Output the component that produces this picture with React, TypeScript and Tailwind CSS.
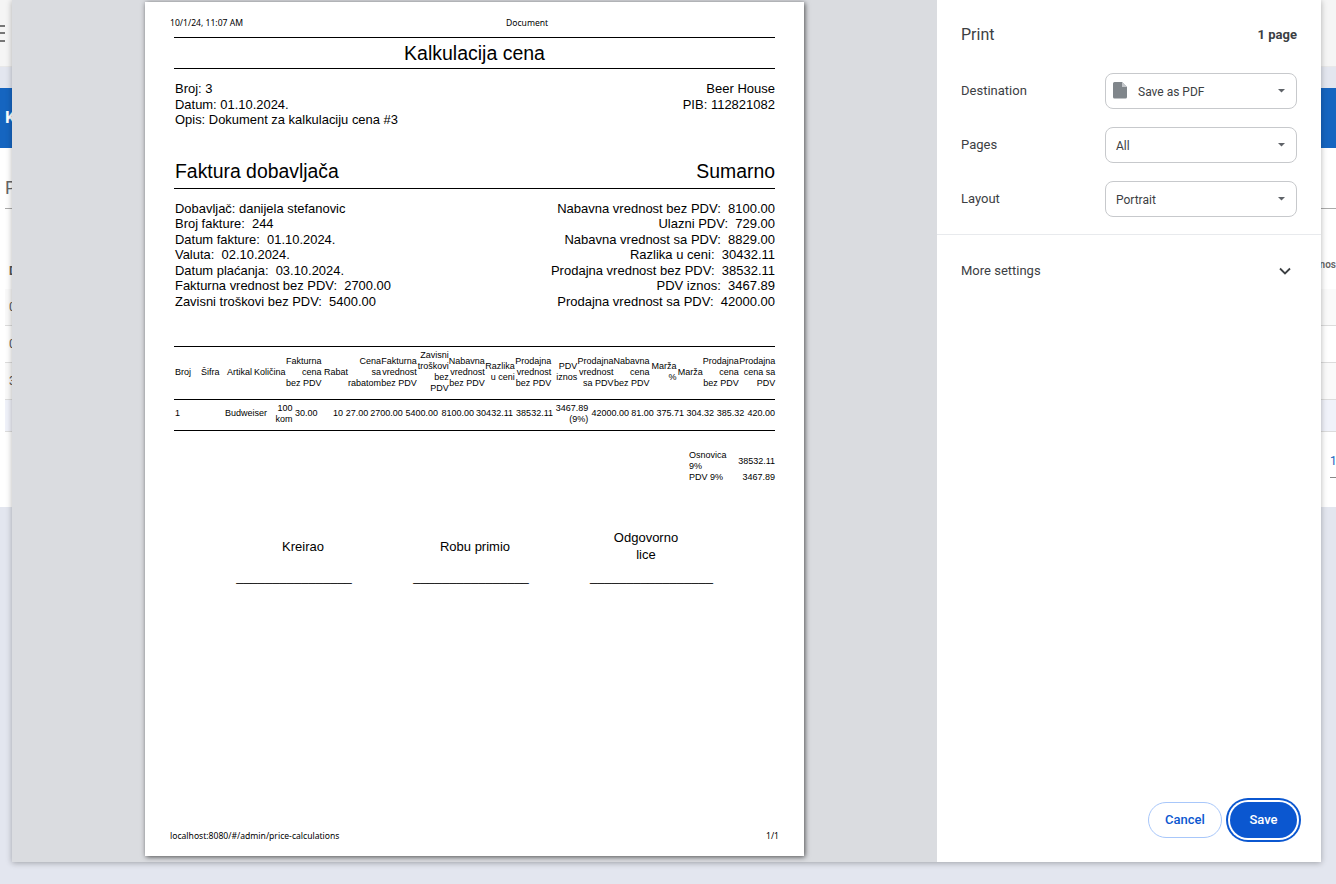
import React from "react";

const headerCells: { c: string; l: string[] }[] = [
  { c: "w-[27px] pl-[1px] text-left", l: ["Broj"] },
  { c: "w-[26px] text-left", l: ["Šifra"] },
  { c: "w-[27px] text-left", l: ["Artikal"] },
  { c: "w-[32px] text-left", l: ["Količina"] },
  { c: "w-[35.500px] text-right", l: ["Fakturna", "cena", "bez PDV"] },
  { c: "w-[26.500px] text-right", l: ["Rabat"] },
  { c: "w-[33px] text-right", l: ["Cena", "sa", "rabatom"] },
  { c: "w-[35.700px] text-right", l: ["Fakturna", "vrednost", "bez PDV"] },
  { c: "w-[32px] text-right", l: ["Zavisni", "troškovi", "bez", "PDV"] },
  { c: "w-[36px] text-right", l: ["Nabavna", "vrednost", "bez PDV"] },
  { c: "w-[30px] text-right", l: ["Razlika", "u ceni"] },
  { c: "w-[36.500px] text-right", l: ["Prodajna", "vrednost", "bez PDV"] },
  { c: "w-[26px] text-right", l: ["PDV", "iznos"] },
  { c: "w-[36.300px] text-right", l: ["Prodajna", "vrednost", "sa PDV"] },
  { c: "w-[36px] text-right", l: ["Nabavna", "cena", "bez PDV"] },
  { c: "w-[27px] text-right", l: ["Marža", "%"] },
  { c: "w-[26.200px] text-right", l: ["Marža"] },
  { c: "w-[36.200px] text-right", l: ["Prodajna", "cena", "bez PDV"] },
  { c: "w-[36.300px] text-right", l: ["Prodajna", "cena sa", "PDV"] },
];

const rowCells: { c: string; l: string[] }[] = [
  { c: "w-[51px] pl-[1px] text-left", l: ["1"] },
  { c: "w-[43px] text-left", l: ["Budweiser"] },
  { c: "w-[24.500px] text-right", l: ["100", "kom"] },
  { c: "w-[26px] pl-[2.500px] text-left", l: ["30.00"] },
  { c: "w-[24.500px] text-right", l: ["10"] },
  { c: "w-[25.300px] text-right", l: ["27.00"] },
  { c: "w-[34.400px] text-right", l: ["2700.00"] },
  { c: "w-[35.300px] text-right", l: ["5400.00"] },
  { c: "w-[36px] text-right", l: ["8100.00"] },
  { c: "w-[39px] text-right", l: ["30432.11"] },
  { c: "w-[40px] text-right", l: ["38532.11"] },
  { c: "w-[35.300px] text-right", l: ["3467.89", "(9%)"] },
  { c: "w-[40.700px] text-right", l: ["42000.00"] },
  { c: "w-[24.700px] text-right", l: ["81.00"] },
  { c: "w-[30.300px] text-right", l: ["375.71"] },
  { c: "w-[30px] text-right", l: ["304.32"] },
  { c: "w-[30.300px] text-right", l: ["385.32"] },
  { c: "w-[30.700px] text-right", l: ["420.00"] },
];

const supplier = [
  "Dobavljač: danijela stefanovic",
  "Broj fakture:  244",
  "Datum fakture:  01.10.2024.",
  "Valuta:  02.10.2024.",
  "Datum plaćanja:  03.10.2024.",
  "Fakturna vrednost bez PDV:  2700.00",
  "Zavisni troškovi bez PDV:  5400.00",
];
const summary = [
  "Nabavna vrednost bez PDV:  8100.00",
  "Ulazni PDV:  729.00",
  "Nabavna vrednost sa PDV:  8829.00",
  "Razlika u ceni:  30432.11",
  "Prodajna vrednost bez PDV:  38532.11",
  "PDV iznos:  3467.89",
  "Prodajna vrednost sa PDV:  42000.00",
];

function Cell({ c, l }: { c: string; l: string[] }) {
  return (
    <div className={c + " shrink-0 whitespace-nowrap"}>
      {l.map((t) => (
        <div key={t}>{t}</div>
      ))}
    </div>
  );
}

function Caret() {
  return (
    <svg width="7" height="4" viewBox="0 0 7 4" className="shrink-0 mr-[1px]">
      <path d="M0 0h7L3.500 3.500z" fill="#5f6368" />
    </svg>
  );
}

function Select({ label, text, icon }: { label: string; text: string; icon?: boolean }) {
  return (
    <div className="flex items-center justify-between">
      <span className="text-[13px] text-[#3c4043]">{label}</span>
      <div className={(icon ? "pl-[6px]" : "pl-[7px]") + " w-[192px] h-[36px] rounded-lg border border-[#c7c9cc] flex items-center pr-[10px]"}>
        {icon ? (
          <svg width="16" height="18" viewBox="0 0 16 18" className="mr-[10px] -mt-[2px] shrink-0">
            <path d="M2.500 1h7.500l5 5v10a1.500 1.500 0 0 1-1.500 1.500h-11A1.500 1.500 0 0 1 1 16V2.500A1.500 1.500 0 0 1 2.500 1z" fill="#80868b" />
            <path d="M10 1l5 5h-5z" fill="#c4c7cb" />
          </svg>
        ) : (
          <span className="w-[3px]" />
        )}
        <span className="text-[12px] text-[#3c4043] flex-1 pt-[3px]">{text}</span>
        <Caret />
      </div>
    </div>
  );
}

function Sign({ title, line, c, t }: { title: React.ReactNode; line: string; c: string; t: string }) {
  return (
    <div className={c + " flex flex-col items-center text-center text-[13px] leading-[17px]"}>
      <div className={t + " h-[34px] flex items-center"}>{title}</div>
      <div className="mt-[5px] whitespace-nowrap">{line}</div>
    </div>
  );
}

function BgRow({ c, left, right }: { c: string; left: string; right?: string }) {
  return (
    <div className={c + " h-[37px] border-b border-[#dcdcdc] flex items-center justify-between text-[12px] text-[#555]"}>
      <span>{left}</span>
      <span>{right}</span>
    </div>
  );
}

export default function App() {
  return (
    <div className="relative w-[1336px] h-[884px] overflow-hidden bg-[#e3e6ef] font-['Roboto',sans-serif]">
      {/* page beneath the dialog */}
      <div className="h-[67px] bg-[#f5f5f5] flex flex-col justify-center gap-[5.500px] border-b border-[#e8e8e8]">
        <div className="w-[5px] h-[2px] bg-[#777]" />
        <div className="w-[5px] h-[2px] bg-[#777]" />
        <div className="w-[5px] h-[2px] bg-[#777]" />
      </div>
      <div className="h-[21px]" />
      <div className="h-[60px] bg-[#1565c0] flex items-center pl-[5px] text-white font-bold text-[17px]">K</div>
      <div className="h-[359px] bg-white pl-[5px]">
        <div className="h-[61px] border-b border-[#aaa] flex items-end pb-[7px] text-[18px] text-[#666]">P</div>
        <div className="h-[80px] flex items-end justify-between pb-[9px] font-bold text-[#555]">
          <span className="pl-[4px] text-[12px]">D</span>
          <span className="mb-[8px] text-[10px] font-semibold text-[#666]">nos</span>
        </div>
        <BgRow c="bg-[#fafafa] pl-[4px]" left="0" />
        <BgRow c="bg-white pl-[4px]" left="0" />
        <BgRow c="bg-[#fafafa] pl-[4px]" left="3" />
        <div className="h-[32px] bg-[#f0f2fa] border-b border-[#dcdcdc]" />
        <div className="flex justify-end pt-[22px] text-[12px] text-[#1565c0]">
          <span className="w-[6px] border-b border-[#888] pb-[9px] leading-[14px]">1</span>
        </div>
      </div>

      {/* print dialog */}
      <div className="absolute left-[12px] top-0 w-[1309px] h-[862px] flex bg-white shadow-[0_1px_6px_rgba(0,0,0,0.3)]">
        <div className="w-[925px] h-full bg-[#dadce0] flex justify-center pt-[2px]">
          <div className="w-[659px] h-[854px] bg-white shadow-[1px_1px_5px_rgba(0,0,0,0.65)] pl-[29px] pr-[29px] flex flex-col font-['Liberation_Sans',sans-serif] text-black">
            <div className="-mx-[4px] h-[35px] pt-[14px] flex gap-[263px] text-[8.600px] leading-[14px] font-['Noto_Sans',sans-serif]">
              <span className="whitespace-nowrap">10/1/24, 11:07 AM</span>
              <span className="whitespace-nowrap">Document</span>
            </div>
            <div className="h-[32px] pt-[1px] border-y border-black flex items-center justify-center text-[19.500px]">Kalkulacija cena</div>
            <div className="mt-[12px] flex justify-between text-[12.950px] leading-[15.500px] pl-[1px]">
              <div>
                <div>Broj: 3</div>
                <div>Datum: 01.10.2024.</div>
                <div>Opis: Dokument za kalkulaciju cena #3</div>
              </div>
              <div className="text-right text-[13px]">
                <div>Beer House</div>
                <div>PIB: 112821082</div>
              </div>
            </div>
            <div className="mt-[27px] h-[34px] pt-[2px] border-b border-black flex justify-between items-center text-[19.400px] pl-[1px]">
              <span>Faktura dobavljača</span>
              <span>Sumarno</span>
            </div>
            <div className="mt-[12px] flex justify-between text-[12.950px] leading-[15.500px] pl-[1px] whitespace-pre">
              <div>
                {supplier.map((s) => (
                  <div key={s}>{s}</div>
                ))}
              </div>
              <div className="text-right text-[13px]">
                {summary.map((s) => (
                  <div key={s}>{s}</div>
                ))}
              </div>
            </div>
            <div className="mt-[37px] text-[9px] leading-[11px]">
              <div className="h-[54px] pb-[2px] border-y border-black flex items-center">
                {headerCells.map((h) => (
                  <Cell key={h.c + h.l[0]} c={h.c} l={h.l} />
                ))}
              </div>
              <div className="h-[31px] pb-[3px] border-b border-black flex items-center">
                {rowCells.map((h) => (
                  <Cell key={h.c + h.l[0]} c={h.c} l={h.l} />
                ))}
              </div>
              <div className="mt-[19px] ml-auto w-[86px]">
                <div className="flex justify-between items-center">
                  <span>
                    Osnovica
                    <br />
                    9%
                  </span>
                  <span className="pt-[1px]">38532.11</span>
                </div>
                <div className="flex justify-between">
                  <span>PDV 9%</span>
                  <span>3467.89</span>
                </div>
              </div>
            </div>
            <div className="mt-[46px] flex">
              <Sign c="ml-[62px] w-[116px]" t="pl-[18px]" title="Kreirao" line="________________" />
              <Sign c="ml-[61px] w-[116px]" t="pl-[8px]" title="Robu primio" line="________________" />
              <Sign
                c="ml-[61px] w-[123px]"
                t="pr-[11px]"
                title={
                  <span>
                    Odgovorno
                    <br />
                    lice
                  </span>
                }
                line="_________________"
              />
            </div>
            <div className="-mx-[4px] mt-auto h-[27px] flex justify-between text-[8.600px] leading-[14px] font-['Noto_Sans',sans-serif]">
              <span>localhost:8080/#/admin/price-calculations</span>
              <span>1/1</span>
            </div>
          </div>
        </div>

        <div className="flex-1 flex flex-col">
          <div className="px-[24px] pt-[25px] flex items-center justify-between">
            <span className="text-[16px] leading-[19px] text-[#3c4043]">Print</span>
            <span className="text-[13px] font-bold text-[#3c4043]">1 page</span>
          </div>
          <div className="px-[24px] pt-[28px] flex flex-col gap-[18px] pb-[17px] border-b border-[#e8eaed]">
            <Select label="Destination" text="Save as PDF" icon />
            <Select label="Pages" text="All" />
            <Select label="Layout" text="Portrait" />
          </div>
          <div className="px-[24px] pt-[26px] flex items-center justify-between">
            <span className="text-[13px] text-[#3c4043]">More settings</span>
            <svg width="24" height="24" viewBox="0 0 24 24" fill="none" className="-my-[4px]">
              <path d="M7 10.500l5 5 5-5" stroke="#3c4043" strokeWidth="1.800" />
            </svg>
          </div>
          <div className="mt-auto pr-[24px] pb-[24px] flex justify-end gap-[8px]">
            <button className="w-[74px] h-[36px] rounded-full border border-[#a8c7fa] text-[13px] font-medium text-[#0b57d0]">Cancel</button>
            <button className="w-[67px] h-[36px] rounded-full bg-[#0b57d0] text-[13px] font-medium text-white shadow-[0_0_0_2px_white,0_0_0_4px_#0b57d0]">Save</button>
          </div>
        </div>
      </div>
    </div>
  );
}
